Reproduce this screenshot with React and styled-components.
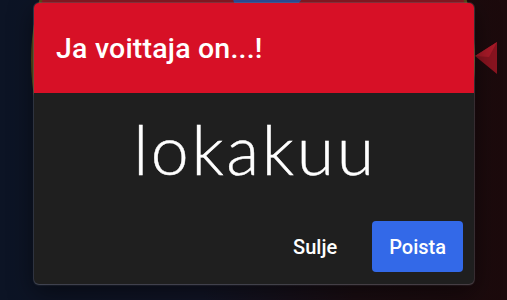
import React from 'react';
import styled, { createGlobalStyle } from 'styled-components';

const GlobalStyle = createGlobalStyle`
	html, body {
		margin: 0;
		padding: 0;
		background: #0d1322;
	}
	* {
		box-sizing: border-box;
	}
`;

const Screen = styled.div`
	position: relative;
	width: 507px;
	height: 300px;
	overflow: hidden;
	background: linear-gradient(90deg, #0c1425 0%, #111425 40%, #1a0d12 70%, #1c0a0c 100%);
	font-family: Roboto, 'Liberation Sans', sans-serif;
`;

const Wheel = styled.svg`
	position: absolute;
	left: 0;
	top: 0;
`;

const Dialog = styled.div`
	position: absolute;
	left: 34px;
	top: 3px;
	width: 440px;
	height: 281px;
	display: flex;
	flex-direction: column;
	border-radius: 5px;
	overflow: hidden;
	background: #1f1f1f;
	box-shadow: 0 0 0 1px rgba(160, 160, 170, 0.18), 0 1px 2px rgba(200, 200, 210, 0.25),
		0 8px 24px rgba(0, 0, 0, 0.5);
`;

const Header = styled.div`
	height: 90px;
	display: flex;
	align-items: center;
	padding: 0 22px;
	background: #d71026;
`;

const Title = styled.h2`
	margin: 0;
	color: #fff;
	font-size: 28.5px;
	font-weight: 500;
	letter-spacing: 0.2px;
`;

const Body = styled.div`
	flex: 1;
	display: flex;
	flex-direction: column;
	padding: 22px 11px 12px;
`;

const Winner = styled.div`
	text-align: center;
	color: #fff;
	font-family: Lato, 'Noto Sans', sans-serif;
	font-weight: 300;
	font-size: 68px;
	line-height: 68px;
	letter-spacing: 2.6px;
	padding-left: 2px;
	-webkit-text-stroke: 0.4px #fff;
`;

const Actions = styled.div`
	margin-top: auto;
	display: flex;
	justify-content: flex-end;
	gap: 18px;
`;

const Button = styled.button`
	height: 51px;
	padding: 0 17px;
	border: none;
	border-radius: 4px;
	font-family: Roboto, 'Liberation Sans', sans-serif;
	font-size: 20px;
	font-weight: 500;
	color: #fff;
	cursor: pointer;
	background: ${(props) => (props.primary ? '#3369e8' : 'transparent')};
`;

function App() {
	return (
		<>
			<GlobalStyle />
			<Screen>
				<Wheel width="507" height="300" viewBox="0 0 507 300">
					<circle cx="253" cy="60" r="222" fill="#5e4c1a" />
					<circle cx="253" cy="60" r="219" fill="#8c1b25" />
					<path d="M253 60 L177 -170 L438 -170 Z" fill="#2f52a0" />
					<path d="M497 42 L475 56 L497 74 Z" fill="#8a1420" />
					<path d="M497 42 L475 56 L489 57 Z" fill="#a81a28" />
				</Wheel>
				<Dialog>
					<Header>
						<Title>Ja voittaja on...!</Title>
					</Header>
					<Body>
						<Winner>lokakuu</Winner>
						<Actions>
							<Button>Sulje</Button>
							<Button primary>Poista</Button>
						</Actions>
					</Body>
				</Dialog>
			</Screen>
		</>
	);
}

export default App;
